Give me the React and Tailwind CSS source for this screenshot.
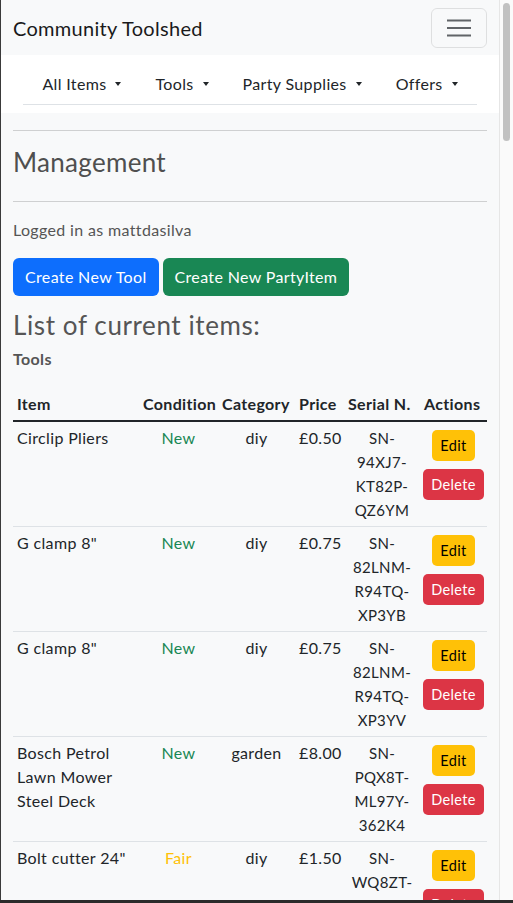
import React from 'react';

const rows = [
  { name: 'Circlip Pliers', cond: 'New', cat: 'diy', price: '£0.50', serial: 'SN-94XJ7-KT82P-QZ6YM' },
  { name: 'G clamp 8"', cond: 'New', cat: 'diy', price: '£0.75', serial: 'SN-82LNM-R94TQ-XP3YB' },
  { name: 'G clamp 8"', cond: 'New', cat: 'diy', price: '£0.75', serial: 'SN-82LNM-R94TQ-XP3YV' },
  { name: 'Bosch Petrol Lawn Mower Steel Deck', cond: 'New', cat: 'garden', price: '£8.00', serial: 'SN-PQX8T-ML97Y-362K4' },
  { name: 'Bolt cutter 24"', cond: 'Fair', cat: 'diy', price: '£1.50', serial: 'SN-WQ8ZT-4HJ2R-7LK9D' },
];

const navLinks = ['All Items', 'Tools', 'Party Supplies', 'Offers'];

const Caret = () => (
  <span className="inline-block ml-[9px] w-0 h-0 border-t-[4px] border-t-[#212529] border-x-[3.5px] border-x-transparent" />
);

// splits serials on the hyphens so each chunk sits on its own line
const Serial = ({ value }) => {
  const parts = value.split('-');
  return (
    <div>
      {parts.map((p, i) => (
        <div key={i}>{i < parts.length - 1 ? p + '-' : p}</div>
      ))}
    </div>
  );
};

export default function App() {
  return (
    <div className="w-[513px] h-[903px] flex flex-col overflow-hidden bg-[#2b2b2b] font-['Lato',sans-serif] text-[16px] leading-[24px] tracking-[0.35px] text-[#212529]">
      <div className="flex flex-1 min-h-0">
        <div className="w-px bg-[#3a3a3a]" />

        <main className="flex-1 min-w-0 overflow-hidden bg-[#f8f9fa]">
          {/* Navbar */}
          <div className="h-[55px] px-3 flex items-center justify-between bg-[#f8f9fa]">
            <span className="text-[20px] leading-[30px] text-[#1a1a1a] tracking-[0.3px]">Community Toolshed</span>
            <button className="w-[56px] h-[40px] flex items-center justify-center rounded-[6px] border border-black/10">
              <svg width="30" height="30" viewBox="0 0 30 30">
                <path d="M3 7.5h24M3 15h24M3 22.5h24" stroke="rgba(33,37,41,0.7)" strokeWidth="2" />
              </svg>
            </button>
          </div>

          {/* Nav links */}
          <div className="bg-white pt-[9px] pb-[8px]">
            <ul className="mx-[22px] flex justify-center border-b border-[#dee2e6]">
              {navLinks.map((l) => (
                <li key={l} className="px-[17px] h-[40px] flex items-center text-[#212529] whitespace-nowrap">
                  {l}
                  <Caret />
                </li>
              ))}
            </ul>
          </div>

          <div className="px-3 flex flex-col">
            <hr className="mt-[17px] border-t border-[#cfd0d1]" />
            <h2 className="mt-[16px] text-[26px] leading-[31px] tracking-[0.3px] text-[#4f4f4f]">Management</h2>
            <hr className="mt-[23px] border-t border-[#cfd0d1]" />
            <p className="mt-[16px] text-[#555]">Logged in as mattdasilva</p>

            <div className="mt-[16px] flex gap-[4px]">
              <button className="h-[38px] px-3 rounded-[6px] bg-[#0d6efd] text-white">Create New Tool</button>
              <button className="h-[38px] px-3 rounded-[6px] bg-[#198754] text-white">Create New PartyItem</button>
            </div>

            <h4 className="mt-[14px] text-[26px] leading-[31px] tracking-[0.6px] text-[#555]">List of current items:</h4>
            <h6 className="mt-[6px] font-bold text-[16px] text-[#555]">Tools</h6>

            <table className="mt-[17px] w-[474px] table-fixed border-collapse">
              <thead>
                <tr className="border-b-2 border-[#212529] text-left font-bold">
                  <th className="w-[126px] p-1">Item</th>
                  <th className="w-[79px] p-1 whitespace-nowrap">Condition</th>
                  <th className="w-[77px] p-1 whitespace-nowrap">Category</th>
                  <th className="w-[49px] p-1">Price</th>
                  <th className="w-[76px] p-1 whitespace-nowrap">Serial N.</th>
                  <th className="w-[67px] p-1">Actions</th>
                </tr>
              </thead>
              <tbody>
                {rows.map((r, i) => (
                  <tr key={i} className="border-b border-[#dee2e6] align-top">
                    <td className="p-1 pr-2">{r.name}</td>
                    <td className={'p-1 text-center ' + (r.cond === 'New' ? 'text-[#198754]' : 'text-[#ffc107]')}>{r.cond}</td>
                    <td className="p-1 text-center">{r.cat}</td>
                    <td className="p-1 text-center">{r.price}</td>
                    <td className="p-1 text-center text-[15px]">
                      <Serial value={r.serial} />
                    </td>
                    <td className="p-1 pt-[8px]">
                      <div className="flex flex-col items-center gap-2">
                        <button className="h-[31px] px-2 rounded-[5px] bg-[#ffc107] text-black text-[14.5px]">Edit</button>
                        <button className="h-[31px] px-2 rounded-[5px] bg-[#dc3545] text-white text-[14.5px]">Delete</button>
                      </div>
                    </td>
                  </tr>
                ))}
              </tbody>
            </table>
          </div>
        </main>

        {/* fake scrollbar */}
        <div className="w-[14px] bg-[#fafafa] border-l border-[#e6e6e6] pt-[3px] flex justify-center">
          <div className="w-[7px] h-[138px] rounded-full bg-[#c1c1c1]" />
        </div>
      </div>
      <div className="h-[3px] bg-[#2b2b2b]" />
    </div>
  );
}
